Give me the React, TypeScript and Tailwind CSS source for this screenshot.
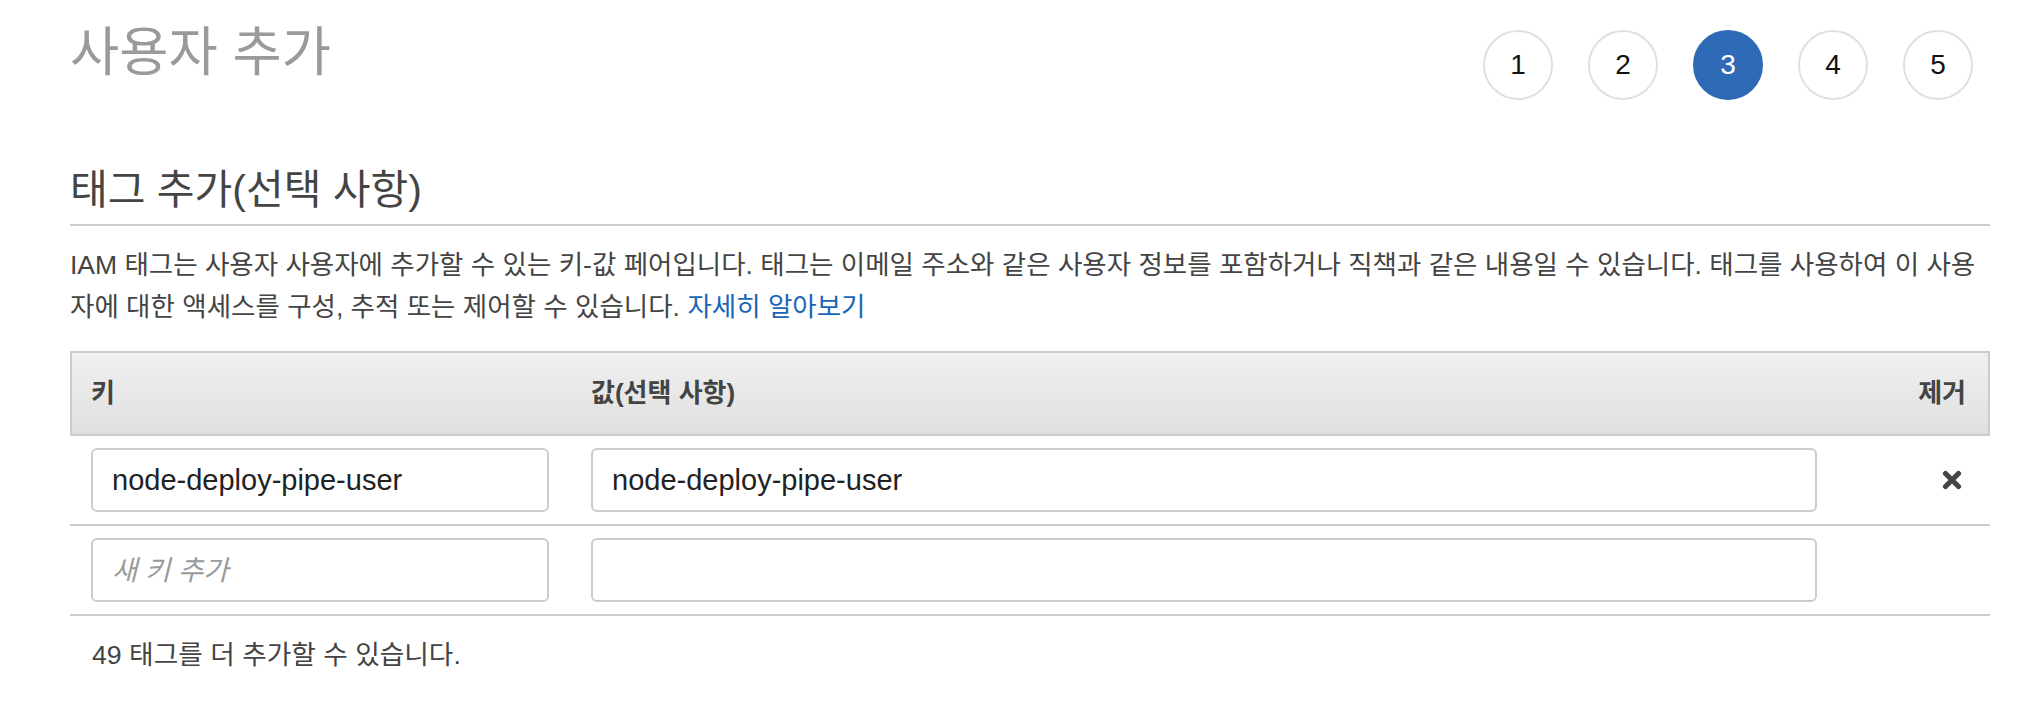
import React from "react";

const font = "font-['Liberation_Sans','Noto_Sans_CJK_KR',sans-serif]";

function Step({ n, active }: { n: number; active?: boolean }) {
  return (
    <div
      className={
        active
          ? "flex h-[70px] w-[70px] items-center justify-center rounded-full border-2 border-[#2e6ab6] bg-[#2e6ab6] text-[28px] text-white"
          : "flex h-[70px] w-[70px] items-center justify-center rounded-full border-2 border-[#e0e0e0] bg-white text-[28px] text-[#111]"
      }
    >
      {n}
    </div>
  );
}

function XIcon() {
  return (
    <svg width="20" height="20" viewBox="0 0 20 20" aria-hidden="true">
      <path d="M3.5 3.5 L16.5 16.5 M16.5 3.5 L3.5 16.5" stroke="#444" strokeWidth="5.2" strokeLinecap="round" fill="none" />
    </svg>
  );
}

export default function App() {
  return (
    <div className={`${font} min-h-[712px] w-full bg-white pl-[70px] pr-[52px]`}>
      <div className="flex h-[166px] items-start justify-between">
        <h1 className="mt-[23px] text-[53.5px] font-normal leading-[60px] text-[#9a9a9a]">사용자 추가</h1>
        <div className="mr-[17px] mt-[30px] flex gap-[35px]">
          <Step n={1} />
          <Step n={2} />
          <Step n={3} active />
          <Step n={4} />
          <Step n={5} />
        </div>
      </div>

      <h2 className="border-b-2 border-[#cccccc] pb-[10px] text-[41px] font-normal leading-[48px] text-[#444]">
        태그 추가(선택 사항)
      </h2>

      <p className="mt-[18px] text-[26.5px] leading-[42px] text-[#444]">
        <span className="whitespace-nowrap">
          IAM 태그는 사용자 사용자에 추가할 수 있는 키-값 페어입니다. 태그는 이메일 주소와 같은 사용자 정보를 포함하거나 직책과 같은 내용일 수 있습니다. 태그를 사용하여 이 사용
        </span>
        <br />
        <span className="whitespace-nowrap">
          자에 대한 액세스를 구성, 추적 또는 제어할 수 있습니다.{" "}
          <a className="text-[#1a64b8]" href="#">
            자세히 알아보기
          </a>
        </span>
      </p>

      <div className="mt-[23px]">
        <div className="flex h-[85px] items-center border-2 border-[#cccccc] bg-linear-to-b from-[#f0f0f0] to-[#e0e0e0] pl-[19px] pr-[22px] text-[26px] font-bold text-[#444]">
          <div className="w-[458px] shrink-0">키</div>
          <div className="ml-[42px] w-[1226px] shrink-0">값(선택 사항)</div>
          <div className="flex flex-1 justify-end">제거</div>
        </div>

        <div className="flex items-center border-b-2 border-[#cccccc] py-[12px] pl-[21px] pr-[28px]">
          <input
            readOnly
            defaultValue="node-deploy-pipe-user"
            className="h-[64px] w-[458px] shrink-0 rounded-[6px] border-2 border-[#cccccc] bg-white px-[19px] text-[29px] text-[#222] outline-none"
          />
          <input
            readOnly
            defaultValue="node-deploy-pipe-user"
            className="ml-[42px] h-[64px] w-[1226px] shrink-0 rounded-[6px] border-2 border-[#cccccc] bg-white px-[19px] text-[29px] text-[#222] outline-none"
          />
          <div className="flex flex-1 justify-end">
            <XIcon />
          </div>
        </div>

        <div className="flex items-center border-b-2 border-[#cccccc] py-[12px] pl-[21px] pr-[28px]">
          <input
            readOnly
            placeholder="새 키 추가"
            className="h-[64px] w-[458px] shrink-0 rounded-[6px] border-2 border-[#cccccc] bg-white px-[19px] text-[29px] text-[#222] outline-none placeholder:text-[27.5px] placeholder:italic placeholder:text-[#9a9a9a]"
          />
          <input
            readOnly
            className="ml-[42px] h-[64px] w-[1226px] shrink-0 rounded-[6px] border-2 border-[#cccccc] bg-white px-[19px] text-[29px] text-[#222] outline-none"
          />
          <div className="flex-1" />
        </div>
      </div>

      <p className="mt-[18px] pl-[22px] text-[26.7px] leading-[42px] text-[#444]">49 태그를 더 추가할 수 있습니다.</p>
    </div>
  );
}
